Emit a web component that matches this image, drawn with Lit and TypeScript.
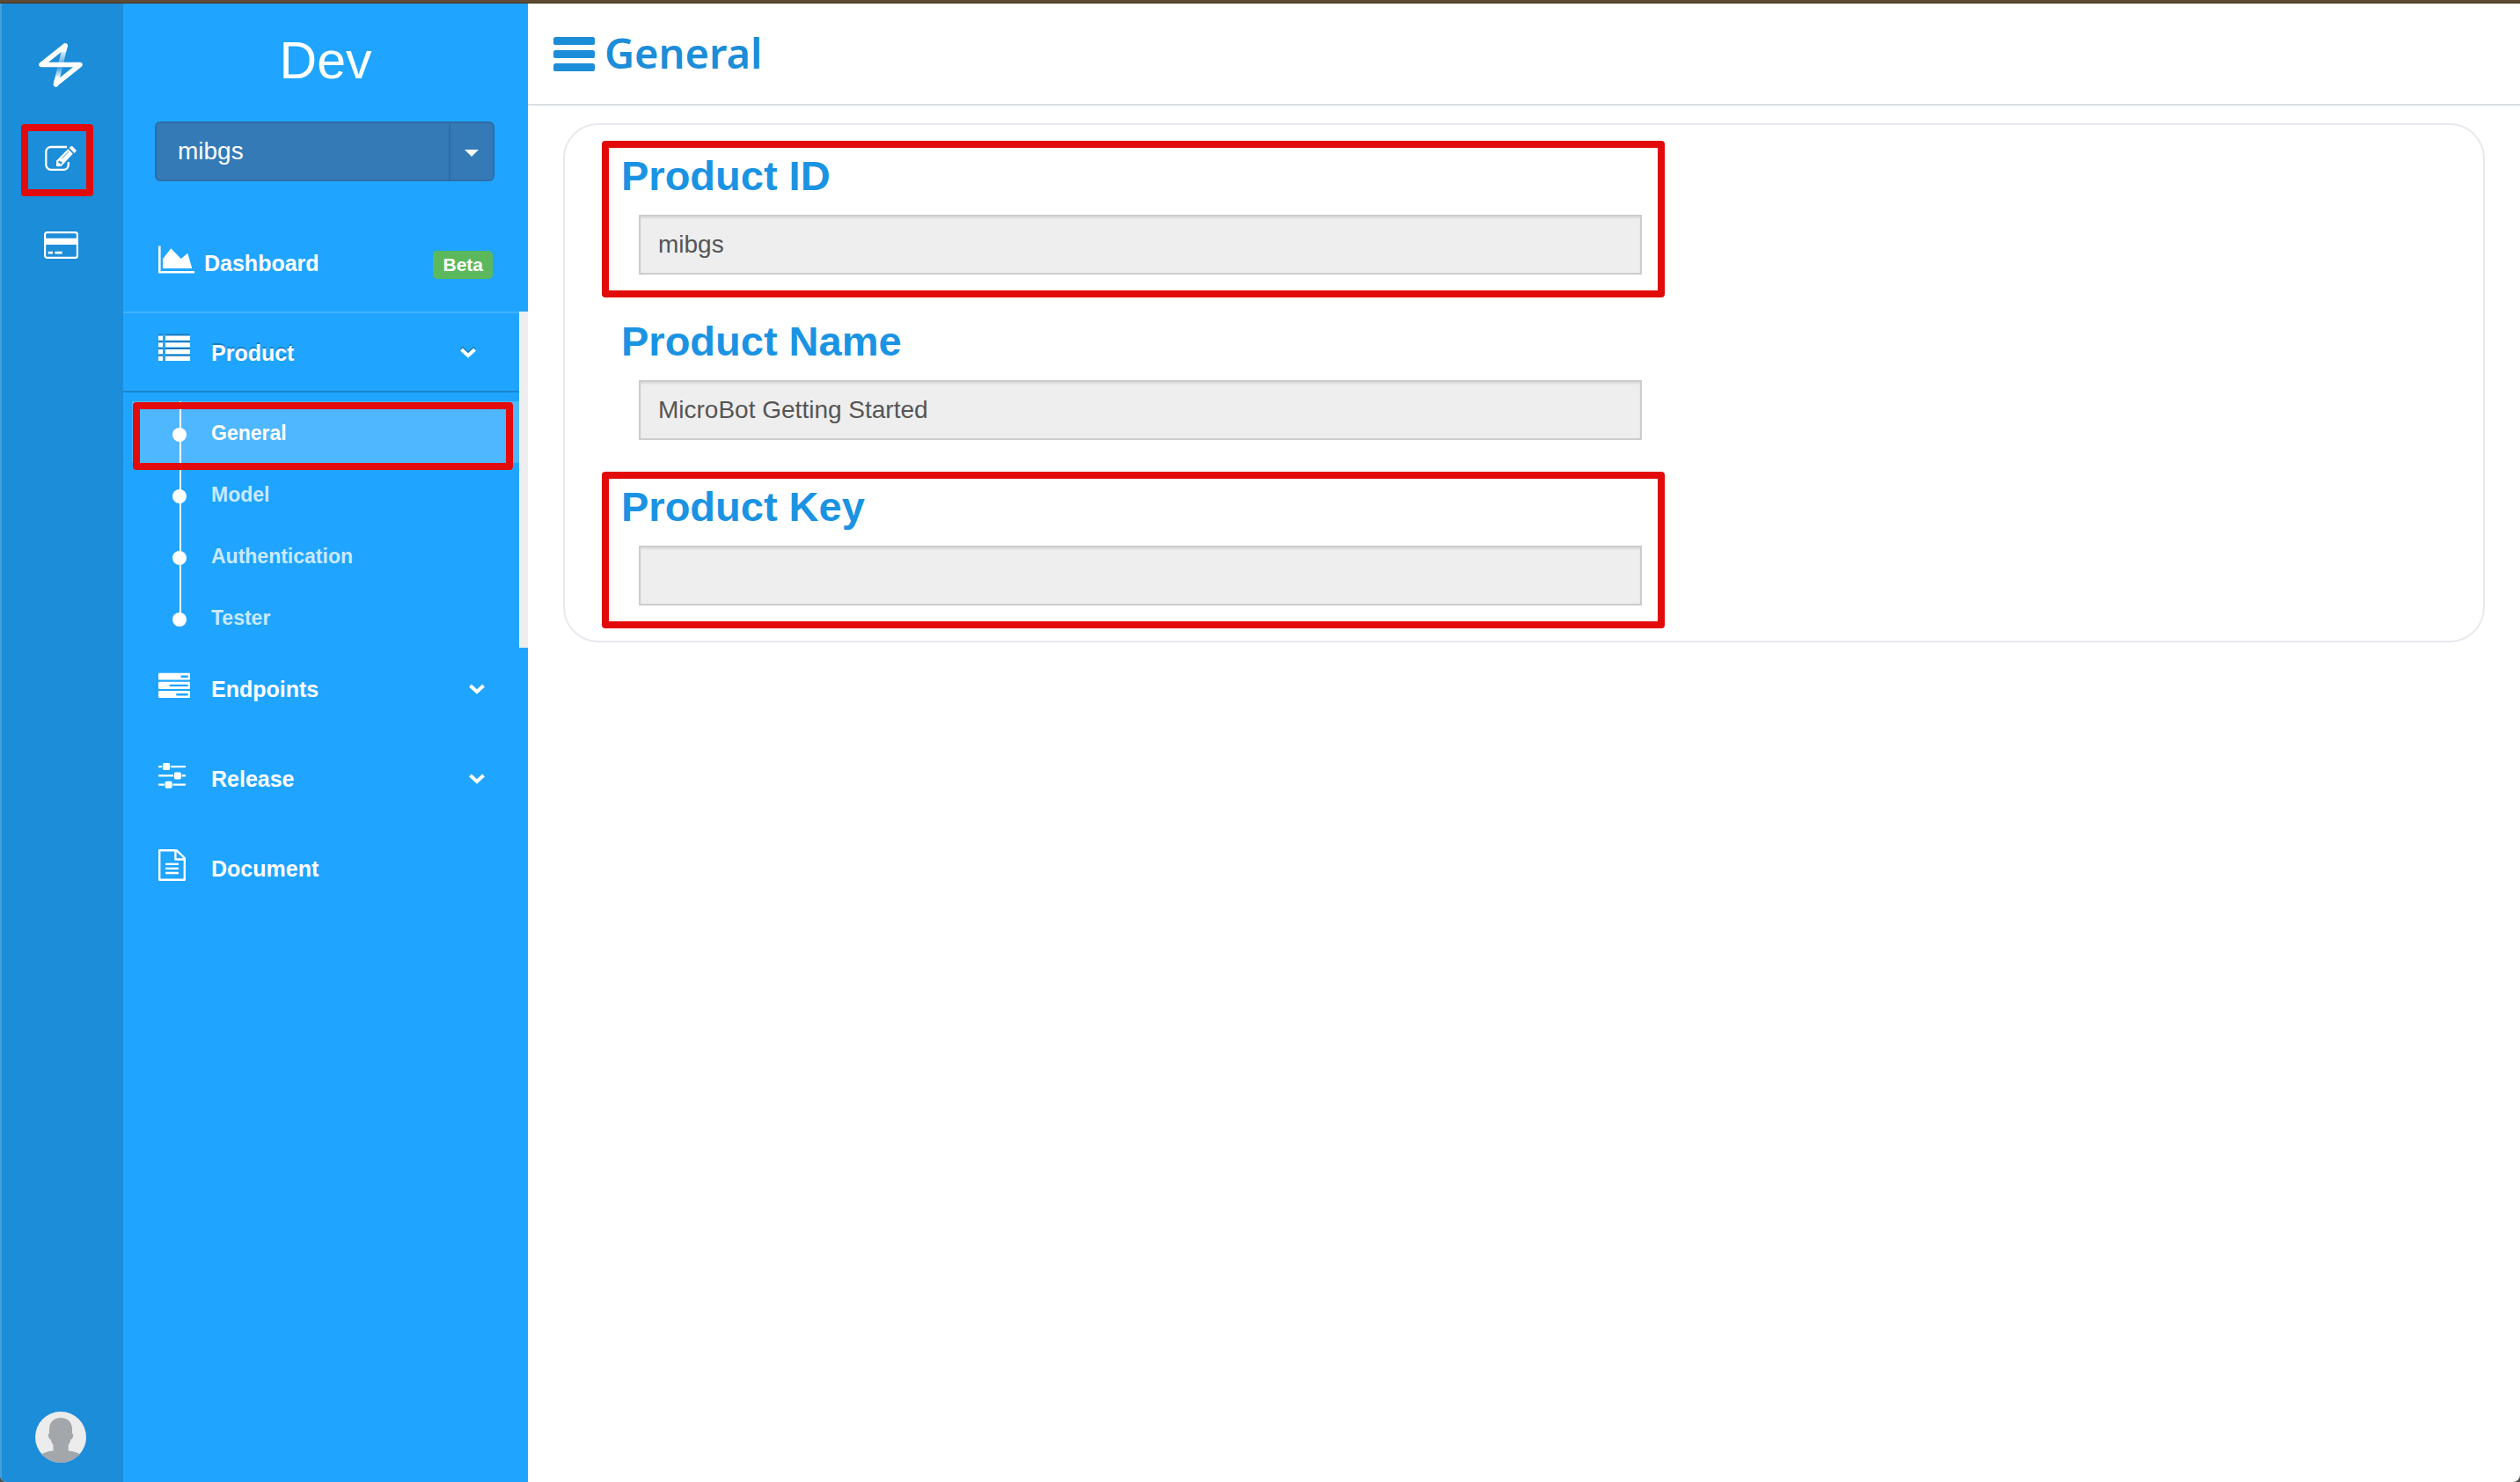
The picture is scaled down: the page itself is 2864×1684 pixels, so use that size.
import { LitElement, html, svg, css, nothing } from "lit";
import { customElement, property } from "lit/decorators.js";
import { classMap } from "lit/directives/class-map.js";

const icons = {
  logo: svg`<svg width="50" height="50" viewBox="0 0 50 50" fill="none" stroke="#fff" stroke-width="5.5" stroke-linecap="round" stroke-linejoin="round" aria-hidden="true">
    <defs>
      <linearGradient id="fade" gradientUnits="userSpaceOnUse" x1="0" y1="3" x2="0" y2="47">
        <stop offset="0" stop-color="#fff"/>
        <stop offset="0.15" stop-color="#fff"/>
        <stop offset="0.17" stop-color="#fff" stop-opacity="0.8"/>
        <stop offset="0.42" stop-color="#fff" stop-opacity="0.35"/>
        <stop offset="0.56" stop-color="#fff" stop-opacity="0.15"/>
        <stop offset="0.82" stop-color="#fff" stop-opacity="0.95"/>
        <stop offset="1" stop-color="#fff"/>
      </linearGradient>
    </defs>
    <path d="M30 3 19.5 47" stroke="url(#fade)"/>
    <path d="M29 7 30 3 3 24.5H47L19.5 46.5 20.5 42"/>
  </svg>`,
  edit: svg`<svg width="36" height="30" viewBox="0 0 36 30" fill="none" aria-hidden="true">
    <path d="M25 2H7A5.5 5.5 0 0 0 1.3 7.5V22A5.5 5.5 0 0 0 7 27.8H21A5.5 5.5 0 0 0 26.8 22V19" stroke="#fff" stroke-width="2.3"/>
    <path d="M13 17.7 26.3 4.3 31.8 9.8 18.5 24H13Z" fill="#fff"/>
    <path d="M27.7 3 29.2 1.6Q30.4.6 31.6 1.6L35.2 5.2Q36 6.2 35.2 7.3L33.4 9Z" fill="#fff"/>
    <path d="M19.2 15.2 26.6 7.8" stroke="#1c8dd8" stroke-width="0.9"/>
    <path d="M15.4 18.6 16.6 17.4 17.2 18.6H19.4V20.6L18.4 21.8H17.4V20.2H15.4Z" fill="#1c8dd8"/>
  </svg>`,
  card: svg`<svg width="39" height="31" viewBox="0 0 39 31" fill="#fff" aria-hidden="true">
    <rect x="1.1" y="1.1" width="36.8" height="28.8" rx="2.4" fill="none" stroke="#fff" stroke-width="2.2"/>
    <path d="M1 7.7H38V15H1ZM4.7 22.8H10V25.4H4.7ZM12.4 22.8H20.6V25.4H12.4Z"/>
  </svg>`,
  chart: svg`<svg width="41" height="32" viewBox="0 0 41 32" fill="#fff" aria-hidden="true">
    <path d="M0 .5H2.6V29H41V31.6H0ZM5 15.3 14.3 3.3 25.7 15 33.3 8.7 38.3 26H5Z"/>
  </svg>`,
  list: svg`<svg width="36" height="30" viewBox="0 0 36 30" fill="#fff" aria-hidden="true">
    <path d="M0 1.6H5V6.8H0ZM8 1.6H36V6.8H8ZM0 9.3H5V14.5H0ZM8 9.3H36V14.5H8ZM0 17H5V22.2H0ZM8 17H36V22.2H8ZM0 24.8H5V30H0ZM8 24.8H36V30H8Z"/>
  </svg>`,
  server: svg`<svg width="36" height="30" viewBox="0 0 36 30" fill="#fff" fill-rule="evenodd" aria-hidden="true">
    <path d="M1 .7H35A1 1 0 0 1 36 1.7V7.6A1 1 0 0 1 35 8.6H1A1 1 0 0 1 0 7.6V1.7A1 1 0 0 1 1 .7ZM25.6 3.5V5.9H33.7V3.5Z"/>
    <path d="M1 10.8H35A1 1 0 0 1 36 11.8V17.9A1 1 0 0 1 35 18.9H1A1 1 0 0 1 0 17.9V11.8A1 1 0 0 1 1 10.8ZM12.7 13.7V16.1H33.7V13.7Z"/>
    <path d="M1 21H35A1 1 0 0 1 36 22V28A1 1 0 0 1 35 29H1A1 1 0 0 1 0 28V22A1 1 0 0 1 1 21ZM20.3 24V26.4H33.7V24Z"/>
  </svg>`,
  sliders: svg`<svg width="31" height="29" viewBox="0 0 31 29" fill="#fff" aria-hidden="true">
    <path d="M0 2.9H4.2V5.2H0ZM14 2.9H31V5.2H14ZM0 13.2H17V15.5H0ZM26.8 13.2H31V15.5H26.8ZM0 23.5H6.8V25.8H0ZM16.4 23.5H31V25.8H16.4Z"/>
    <rect x="5.1" y="0.1" width="8" height="8" rx="1.6"/>
    <rect x="17.9" y="10.4" width="8" height="8" rx="1.6"/>
    <rect x="7.6" y="20.7" width="8" height="8" rx="1.6"/>
  </svg>`,
  doc: svg`<svg width="31" height="36" viewBox="0 0 31 36" fill="none" stroke="#fff" stroke-width="2.4" stroke-linejoin="round" aria-hidden="true">
    <path d="M1.2 1.2H20.5L29.8 10V34.8H1.2ZM19.4 1.2V11.5H29.8M8 16.9H23M8 21.9H23M8 27H23"/>
  </svg>`,
  chevron: svg`<svg width="18" height="12" viewBox="0 0 18 12" fill="none" stroke="#fff" stroke-width="4" aria-hidden="true">
    <path d="M1.4 2 9 9 16.6 2"/>
  </svg>`,
  caret: svg`<svg width="16" height="8" viewBox="0 0 16 8" fill="#fff" aria-hidden="true"><path d="M0 0H16L8 8Z"/></svg>`,
  bars: svg`<svg width="47" height="39" viewBox="0 0 47 39" fill="#1c8dd8" aria-hidden="true">
    <rect width="47" height="9" rx="2.6"/><rect y="15" width="47" height="9" rx="2.6"/><rect y="30" width="47" height="9" rx="2.6"/>
  </svg>`,
  avatar: svg`<svg width="58" height="58" viewBox="0 0 58 58" aria-hidden="true">
    <clipPath id="disc"><circle cx="29" cy="29" r="29"/></clipPath>
    <g clip-path="url(#disc)">
      <rect width="58" height="58" fill="#ececec"/>
      <path fill="#a3a7ab" d="M29 7C37 7 41.6 12 42 19V25Q43.8 25.2 43 28.5Q42 31.6 40.5 31.5Q39.5 36 37.7 38V44.5Q46 45 52 49V58H6V49Q12 45 20.5 44.5V38Q18.5 36 17.5 31.5Q16 31.6 15 28.5Q14.2 25.2 16 25V19C16.4 12 21 7 29 7Z"/>
    </g>
  </svg>`,
};

const reset = css`
  *, *::before, *::after { box-sizing: border-box; }
  button, input { font: inherit; margin: 0; }
  button { cursor: pointer; }
  a { color: inherit; text-decoration: none; }
  svg { display: block; flex: none; }
  ul { list-style: none; margin: 0; padding: 0; }
  .callout { position: absolute; border: 8px solid #e20a0a; border-radius: 4px; pointer-events: none; }
`;

@customElement("icon-rail")
class IconRail extends LitElement {
  static styles = [reset, css`
    :host { display: flex; flex: none; width: 140px; background: #1c8dd8; border-left: 2px solid #459fdc; }
    .rail { display: flex; flex-direction: column; align-items: center; flex: 1; padding: 45px 4px 22px 0; }
    .logo { margin-bottom: 31px; }
    .item { position: relative; display: flex; align-items: center; justify-content: center; width: 100px; height: 99px; }
    .callout { inset: 11px 13px 6px 5px; }
    .user { margin-top: auto; padding: 0; border: 0; background: none; border-radius: 50%; }
  `];

  render() {
    return html`<nav class="rail" aria-label="Main">
      <a class="logo" href="#home" aria-label="Home">${icons.logo}</a>
      <a class="item" href="#products" aria-label="Products">${icons.edit}<span class="callout"></span></a>
      <a class="item" href="#billing" aria-label="Billing">${icons.card}</a>
      <button class="user" type="button" aria-label="Account">${icons.avatar}</button>
    </nav>`;
  }
}

@customElement("side-menu")
class SideMenu extends LitElement {
  static styles = [reset, css`
    :host { display: block; flex: none; width: 460px; padding-top: 29px; background: #1fa5ff; color: #fff; }
    .title { margin: 0 0 33px; font-size: 59px; line-height: 72px; font-weight: 400; text-align: center; }
    .picker { display: flex; height: 68px; margin: 0 38px 46px 36px; border: 2px solid #2e6da4; border-radius: 6px; background: #337ab7; font-size: 28px; }
    .picker button { border: 0; background: none; color: #fff; }
    .current { flex: 1; padding: 0 24px; text-align: left; }
    .picker .toggle { display: flex; align-items: center; justify-content: center; width: 50px; padding: 4px 0 0; border-left: 2px solid #2e6da4; }
    .row { display: flex; align-items: center; width: 100%; height: 92px; margin-bottom: 10px; padding: 2px 40px 0; border: 0; background: none; color: #fff; font-size: 25px; line-height: 28px; font-weight: 700; text-align: left; }
    .icon { width: 60px; margin-bottom: 8px; }
    .wide { width: 52px; }
    .label { flex: 1; }
    .arrow { margin-right: 9px; }
    .badge { margin-top: 4px; padding: 4px 11px; border-radius: 5px; background: #5cb85c; font-size: 21px; line-height: 24px; }
    .open { border-right: 10px solid #eee; }
    .open .row { margin-bottom: 0; border-top: 2px solid #41b2ff; border-bottom: 2px solid #1a86cf; text-shadow: 0 -2px 0 rgba(0, 0, 0, 0.25); }
    .open .icon { margin-bottom: 12px; }
    .open .row svg { filter: drop-shadow(0 -2px 0 rgba(0, 0, 0, 0.25)); }
    .sub { padding: 10px 0 0 10px; }
    .link { position: relative; display: flex; align-items: center; height: 70px; padding: 2px 0 0 46px; color: #cae9ff; font-size: 23px; line-height: 26px; font-weight: 700; }
    .active { background: #4fb7ff; color: #fff; }
    .dot { width: 16px; height: 16px; margin: 4px 28px 0 0; border-radius: 50%; background: #fff; }
    .dot::before { content: ""; position: absolute; top: 0; left: 54px; width: 2px; height: 100%; background: #fff; }
    .last .dot::before { height: 50%; }
    .callout { inset: 1px 7px -8px 1px; z-index: 1; }
  `];

  private sub = ["General", "Model", "Authentication", "Tester"];

  private group(icon: unknown, label: string, expandable: boolean) {
    return expandable
      ? html`<button class="row" type="button">
          <span class="icon">${icon}</span><span class="label">${label}</span><span class="arrow">${icons.chevron}</span>
        </button>`
      : html`<a class="row" href="#${label.toLowerCase()}"><span class="icon">${icon}</span><span class="label">${label}</span></a>`;
  }

  render() {
    return html`
      <h1 class="title">Dev</h1>
      <div class="picker">
        <button class="current" type="button">mibgs</button>
        <button class="toggle" type="button" aria-label="Choose product">${icons.caret}</button>
      </div>
      <nav aria-label="Product">
        <a class="row" href="#dashboard">
          <span class="icon wide">${icons.chart}</span><span class="label">Dashboard</span><span class="badge">Beta</span>
        </a>
        <div class="open">
          ${this.group(icons.list, "Product", true)}
          <ul class="sub">
            ${this.sub.map((name, i) => html`<li>
              <a class=${classMap({ link: true, active: i === 0, last: i === this.sub.length - 1 })} href="#${name.toLowerCase()}">
                <span class="dot"></span>${name}${i === 0 ? html`<span class="callout"></span>` : nothing}
              </a>
            </li>`)}
          </ul>
        </div>
        ${this.group(icons.server, "Endpoints", true)}
        ${this.group(icons.sliders, "Release", true)}
        ${this.group(icons.doc, "Document", false)}
      </nav>`;
  }
}

@customElement("product-field")
class ProductField extends LitElement {
  @property() label = "";
  @property() value = "";
  @property({ type: Boolean }) marked = false;

  static styles = [reset, css`
    :host { display: flex; flex-direction: column; position: relative; }
    .label { margin-bottom: 16px; padding-left: 2px; color: #1b93e3; font-size: 47px; line-height: 56px; font-weight: 700; }
    .value { height: 68px; margin-left: 22px; padding: 0 20px; border: 2px solid #ccc; border-radius: 0; background: #eee; box-shadow: inset 0 2px 2px rgba(0, 0, 0, 0.075); color: #555; font-size: 28px; }
    .callout { inset: -12px -26px -26px -20px; }
  `];

  render() {
    return html`<label class="label" for="value">${this.label}</label>
      <input class="value" id="value" type="text" readonly .value=${this.value}>
      ${this.marked ? html`<span class="callout"></span>` : nothing}`;
  }
}

@customElement("app-root")
class AppRoot extends LitElement {
  static styles = [reset, css`
    :host { display: flex; flex-direction: column; min-height: 100vh; background: #4b514c; font-family: "Liberation Sans", Arial, sans-serif; }
    .edge { height: 4px; background: #5f4b34; border-bottom: 1px solid #41321f; }
    .window { display: flex; flex: 1; overflow: hidden; border-radius: 0 0 8px 8px; background: #fff; }
    .main { flex: 1; min-width: 0; }
    .header { display: flex; align-items: center; gap: 11px; height: 116px; padding: 0 29px; border-bottom: 2px solid #dadfe3; color: #1c8dd8; }
    .menu { padding: 0; border: 0; background: none; }
    .heading { margin: 0; padding-bottom: 2px; font-family: "Noto Sans", sans-serif; font-size: 47px; line-height: 64px; font-weight: 600; }
    .panel { margin: 20px 40px; border: 2px solid #e6e9ee; border-radius: 40px; }
    .form { display: flex; flex-direction: column; gap: 48px; width: 60%; padding: 30px 84px 40px 62px; }
  `];

  render() {
    return html`
      <div class="edge"></div>
      <div class="window">
        <icon-rail></icon-rail>
        <side-menu></side-menu>
        <main class="main">
          <header class="header">
            <button class="menu" type="button" aria-label="Toggle menu">${icons.bars}</button>
            <h2 class="heading">General</h2>
          </header>
          <section class="panel">
            <form class="form">
              <product-field label="Product ID" value="mibgs" marked></product-field>
              <product-field label="Product Name" value="MicroBot Getting Started"></product-field>
              <product-field label="Product Key" marked></product-field>
            </form>
          </section>
        </main>
      </div>`;
  }
}
